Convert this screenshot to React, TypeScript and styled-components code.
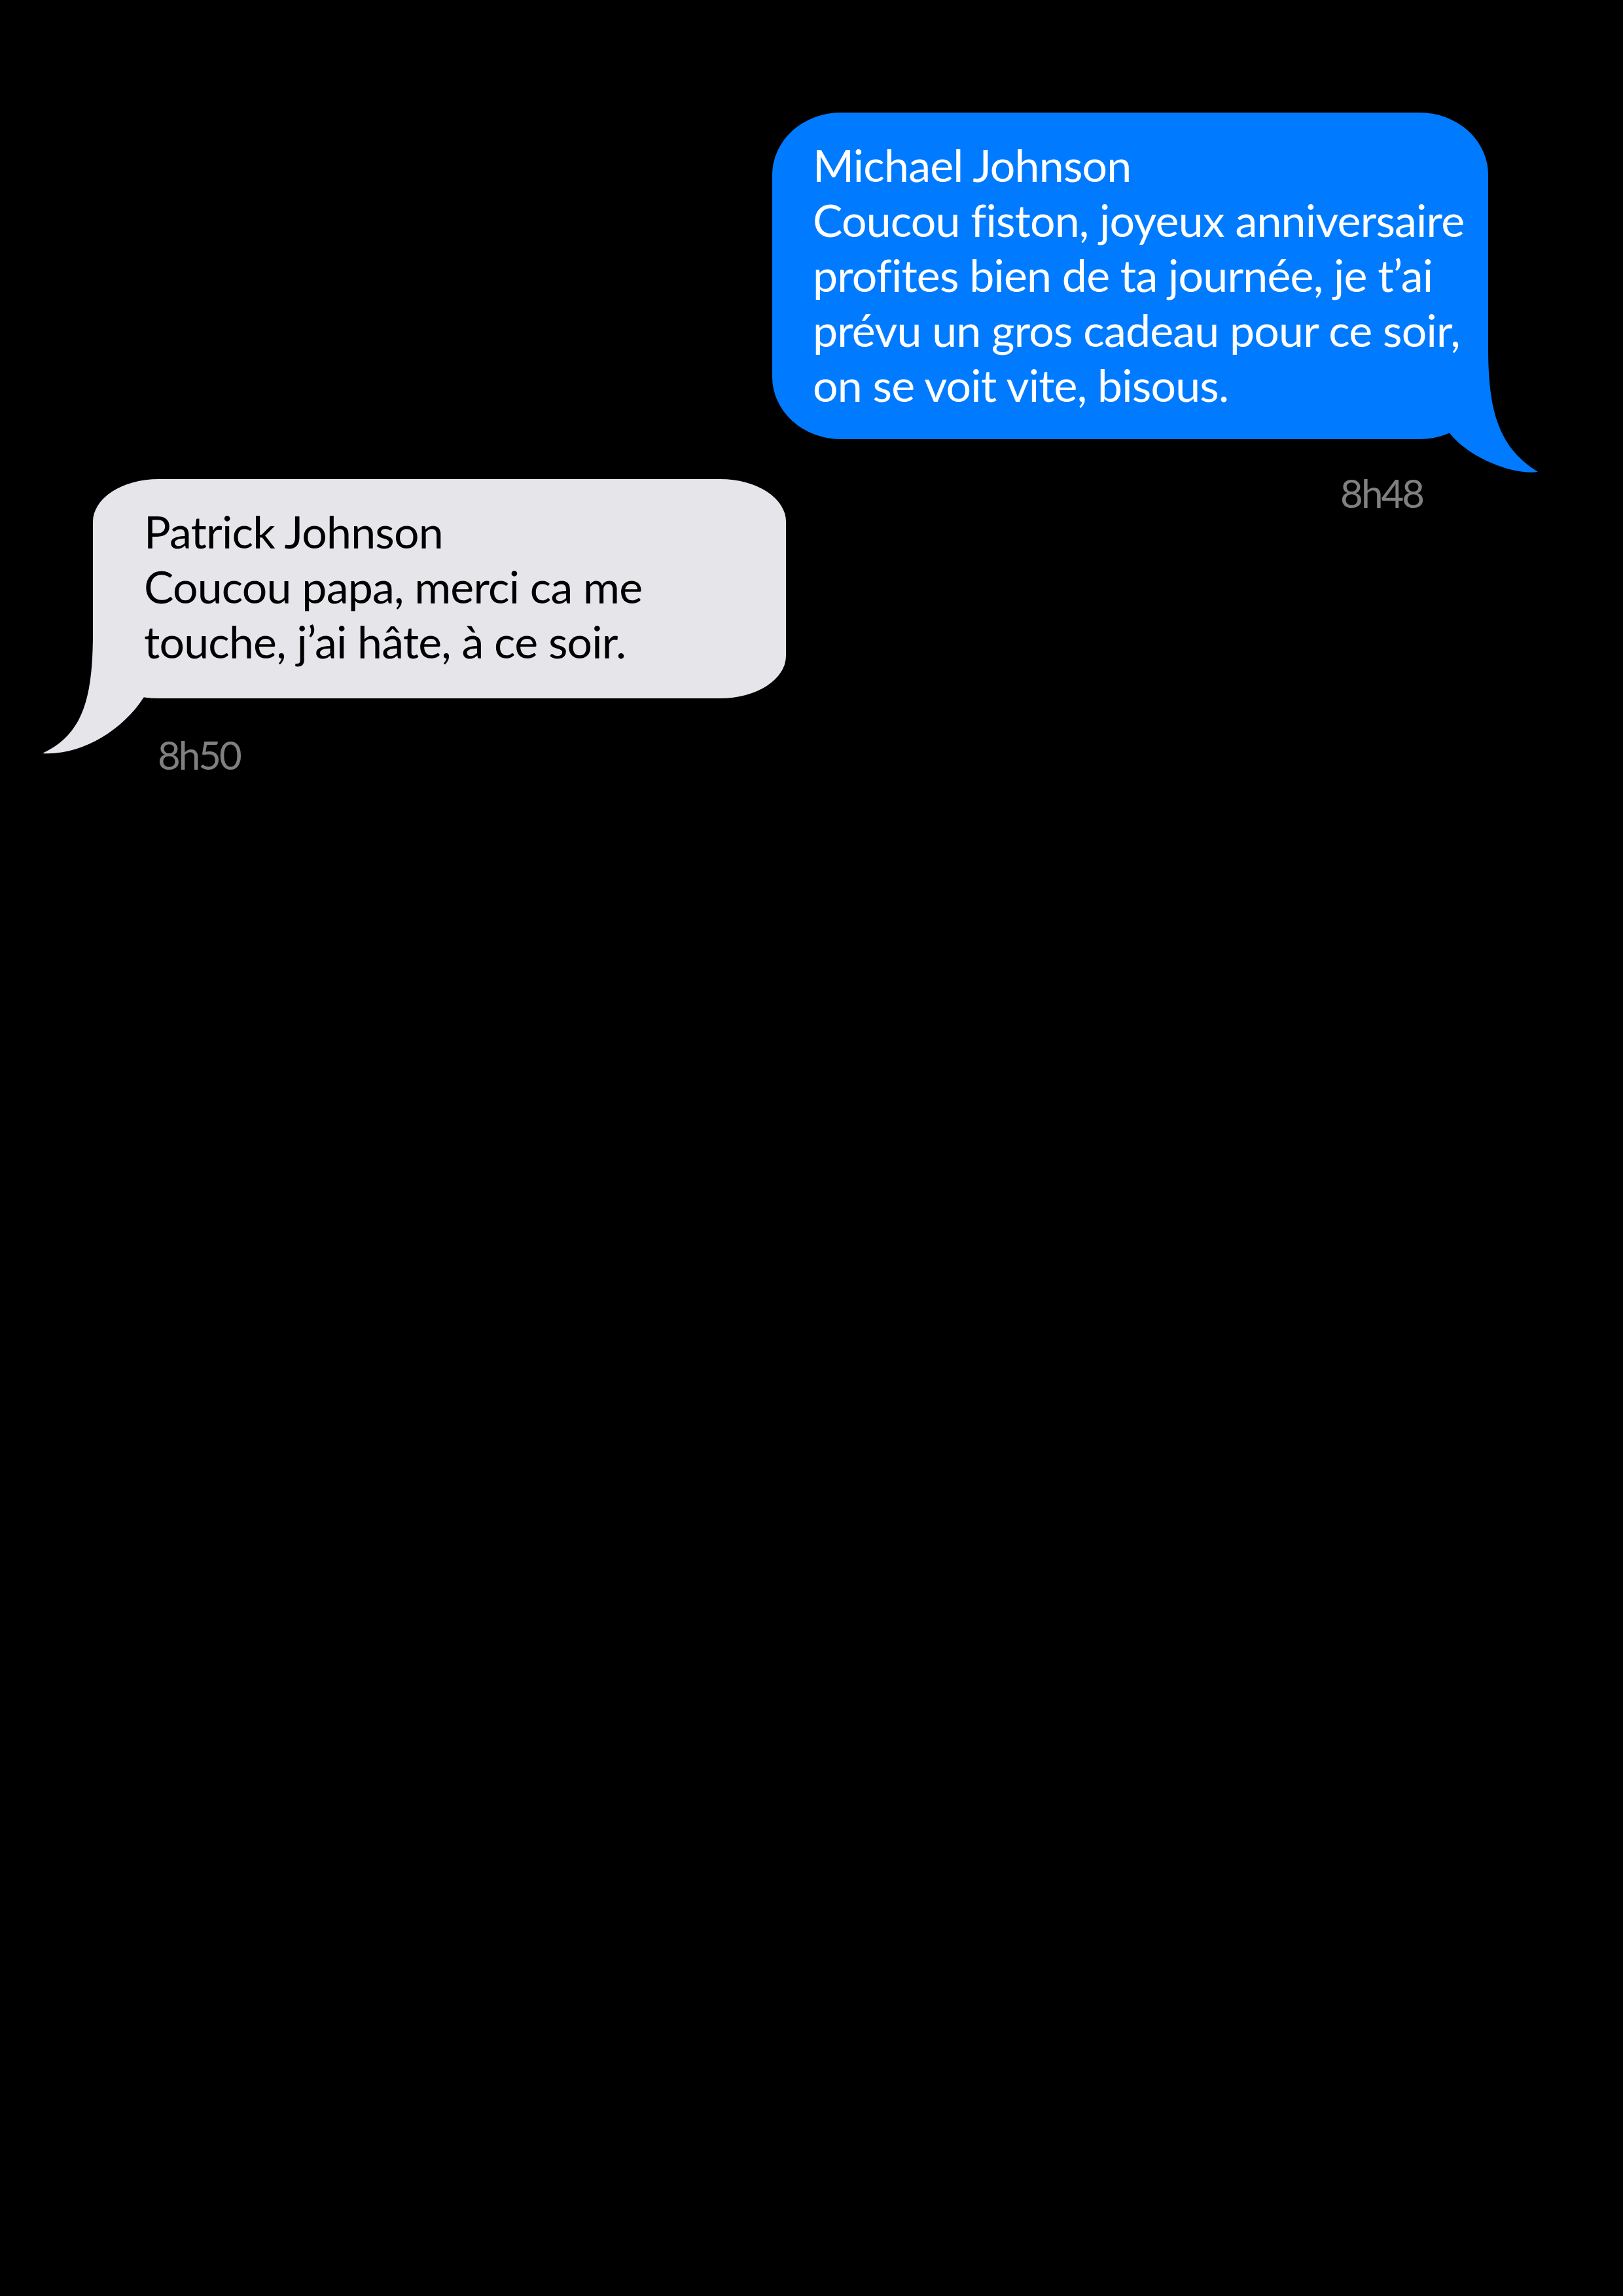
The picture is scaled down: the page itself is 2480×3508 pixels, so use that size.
import React from "react";
import styled, { createGlobalStyle } from "styled-components";

type Side = "out" | "in";

const Global = createGlobalStyle`
  html, body {
    margin: 0;
    padding: 0;
    background: #000000;
  }
  body {
    min-height: 3508px;
    font-family: Lato, "Open Sans", "Noto Sans", sans-serif;
  }
`;

const Page = styled.main`
  box-sizing: border-box;
  width: 2480px;
  min-height: 3508px;
  padding-top: 172px;
  background: #000000;
  display: flex;
  flex-direction: column;
`;

const Message = styled.section<{ $side: Side; $pull?: number }>`
  display: flex;
  flex-direction: column;
  align-items: ${(p) => (p.$side === "out" ? "flex-end" : "flex-start")};
  padding-right: ${(p) => (p.$side === "out" ? "206px" : "0")};
  padding-left: ${(p) => (p.$side === "in" ? "142px" : "0")};
  margin-top: ${(p) => (p.$pull ? `${p.$pull}px` : "0")};
`;

const Bubble = styled.div<{ $side: Side }>`
  position: relative;
  box-sizing: border-box;
  width: ${(p) => (p.$side === "out" ? "1094px" : "1059px")};
  padding: ${(p) => (p.$side === "out" ? "38px 0 41px 62px" : "38px 0 45px 78px")};
  background: ${(p) => (p.$side === "out" ? "#007BFF" : "#E5E5EA")};
  color: ${(p) => (p.$side === "out" ? "#FFFFFF" : "#000000")};
  border-radius: ${(p) => (p.$side === "out" ? "105px / 95px" : "100px / 65px")};
  font-size: 68px;
  line-height: 84px;
  letter-spacing: -0.8px;
`;

const Line = styled.span`
  display: block;
  white-space: nowrap;
  position: relative;
  z-index: 1;
`;

const Tail = styled.svg<{ $side: Side }>`
  position: absolute;
  ${(p) =>
    p.$side === "out"
      ? "right: -80px; bottom: -55px; width: 160px; height: 210px;"
      : "left: -80px; bottom: -90px; width: 170px; height: 220px;"}
  display: block;
  overflow: visible;
`;

const Time = styled.div<{ $side: Side }>`
  font-size: 60px;
  line-height: 60px;
  letter-spacing: -3px;
  color: #808080;
  margin-top: ${(p) => (p.$side === "out" ? "52px" : "56px")};
  margin-right: ${(p) => (p.$side === "out" ? "100px" : "0")};
  margin-left: ${(p) => (p.$side === "in" ? "99px" : "0")};
`;

function OutTail() {
  return (
    <Tail $side="out" viewBox="0 0 160 210" aria-hidden>
      <path
        d="M80 17 C80 120 100 170 156 205 C120 210 50 185 19 143 L0 140 L0 17 Z"
        fill="#007BFF"
      />
    </Tail>
  );
}

function InTail() {
  return (
    <Tail $side="in" viewBox="0 0 170 220" aria-hidden>
      <path
        d="M80 28 C80 130 65 185 3 214 C60 218 125 180 158 128 L170 120 L170 28 Z"
        fill="#E5E5EA"
      />
    </Tail>
  );
}

export default function App() {
  return (
    <>
      <Global />
      <Page>
        <Message $side="out">
          <Bubble $side="out">
            <Line>Michael Johnson</Line>
            <Line>Coucou fiston, joyeux anniversaire</Line>
            <Line>profites bien de ta journée, je t’ai</Line>
            <Line>prévu un gros cadeau pour ce soir,</Line>
            <Line>on se voit vite, bisous.</Line>
            <OutTail />
          </Bubble>
          <Time $side="out">8h48</Time>
        </Message>
        <Message $side="in" $pull={-51}>
          <Bubble $side="in">
            <Line>Patrick Johnson</Line>
            <Line>Coucou papa, merci ca me</Line>
            <Line>touche, j’ai hâte, à ce soir.</Line>
            <InTail />
          </Bubble>
          <Time $side="in">8h50</Time>
        </Message>
      </Page>
    </>
  );
}
